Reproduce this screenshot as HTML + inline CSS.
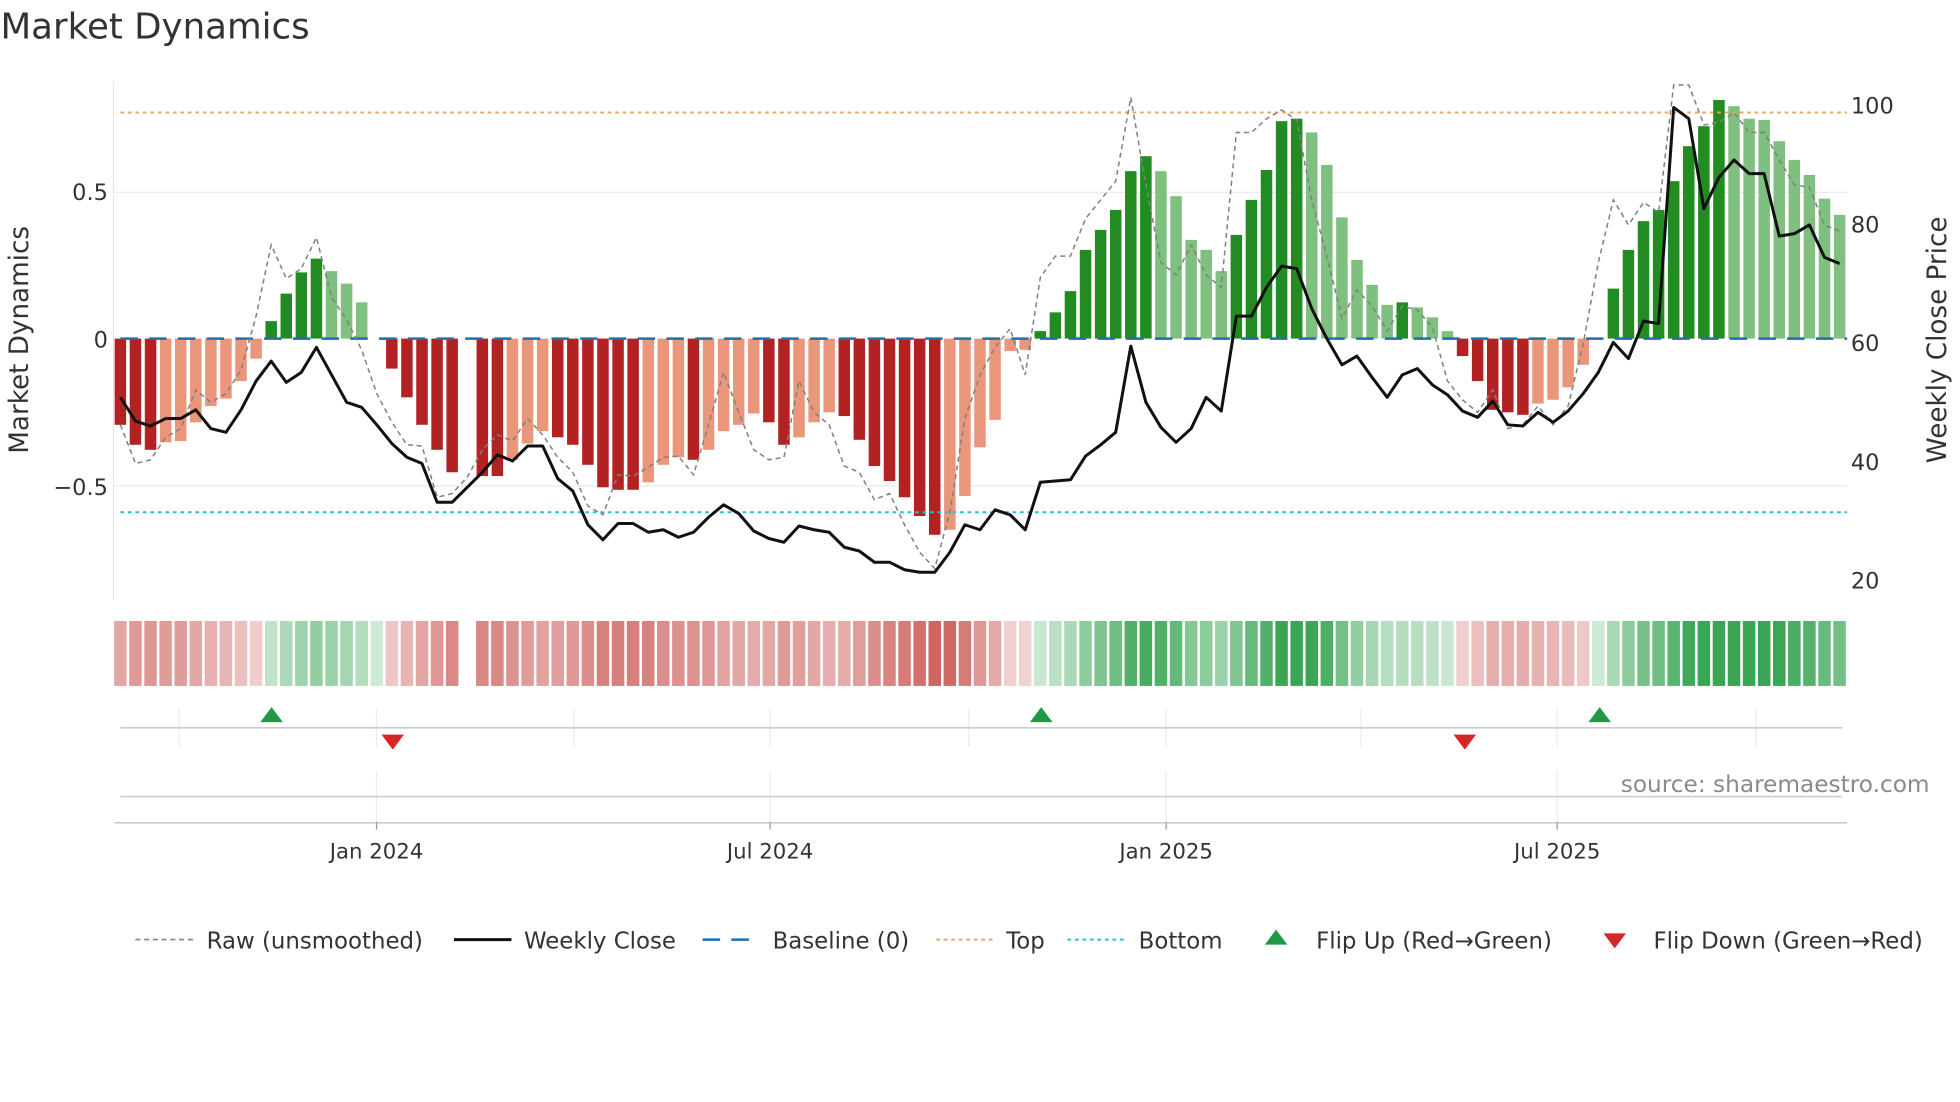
<!DOCTYPE html>
<html><head><meta charset="utf-8"><style>
html,body{margin:0;padding:0;background:#fff;width:1960px;height:1102px;overflow:hidden}
svg{display:block;font-family:"DejaVu Sans","Liberation Sans",sans-serif}
</style></head><body>
<svg id="s" width="1960" height="1102" viewBox="0 0 1568 882" xmlns="http://www.w3.org/2000/svg">
<rect width="1568" height="882" fill="#fff"/>
<text x="0" y="31" font-size="28.5" fill="#333">Market Dynamics</text>
<line x1="91" y1="154" x2="1478" y2="154" stroke="#ebebeb" stroke-width="1"/>
<line x1="91" y1="389" x2="1478" y2="389" stroke="#ebebeb" stroke-width="1"/>
<line x1="90.5" y1="65" x2="90.5" y2="480" stroke="#e6e6e6" stroke-width="1"/>
<g id="bars"></g>
<line x1="96" y1="271" x2="1478" y2="271" stroke="#1f6fa8" stroke-width="2" stroke-dasharray="14,9"/>
<line x1="96" y1="90" x2="1478" y2="90" stroke="#f0a560" stroke-width="1.6" stroke-dasharray="3,3"/>
<line x1="96" y1="410" x2="1478" y2="410" stroke="#22c3d6" stroke-width="1.6" stroke-dasharray="3,3"/>
<polyline id="raw" fill="none" stroke="#808080" stroke-width="1.2" stroke-dasharray="4,3"/>
<polyline id="close" fill="none" stroke="#111" stroke-width="2.4" stroke-linejoin="round"/>
<g font-size="18" fill="#333">
<text x="86" y="160" text-anchor="end">0.5</text>
<text x="86" y="278" text-anchor="end">0</text>
<text x="86" y="396" text-anchor="end">−0.5</text>
<text x="1481" y="91">100</text>
<text x="1481" y="186">80</text>
<text x="1481" y="281">60</text>
<text x="1481" y="376">40</text>
<text x="1481" y="471">20</text>
<text transform="translate(22,272) rotate(-90)" text-anchor="middle" font-size="21">Market Dynamics</text>
<text transform="translate(1557,272) rotate(-90)" text-anchor="middle" font-size="21">Weekly Close Price</text>
</g>
<g id="heat"></g>
<g stroke="#ececec" stroke-width="1">
<line x1="143" y1="567" x2="143" y2="598"/><line x1="301" y1="567" x2="301" y2="598"/><line x1="459" y1="567" x2="459" y2="598"/><line x1="616" y1="567" x2="616" y2="598"/><line x1="775" y1="567" x2="775" y2="598"/><line x1="933" y1="567" x2="933" y2="598"/><line x1="1089" y1="567" x2="1089" y2="598"/><line x1="1246" y1="567" x2="1246" y2="598"/><line x1="1405" y1="567" x2="1405" y2="598"/>
<line x1="301" y1="617" x2="301" y2="658"/><line x1="616" y1="617" x2="616" y2="658"/><line x1="933" y1="617" x2="933" y2="658"/><line x1="1246" y1="617" x2="1246" y2="658"/>
</g>
<line x1="96" y1="582.5" x2="1474" y2="582.5" stroke="#ccc" stroke-width="1.3"/>
<line x1="96" y1="637.5" x2="1474" y2="637.5" stroke="#ccc" stroke-width="1.3"/>
<line x1="91" y1="658.5" x2="1478" y2="658.5" stroke="#ccc" stroke-width="1.3"/>
<g fill="#1e9a45">
<polygon points="217,566 208,578 226,578"/><polygon points="833,566 824,578 842,578"/><polygon points="1280,566 1271,578 1289,578"/>
</g>
<g fill="#d62728">
<polygon points="305,588 323,588 314,600"/><polygon points="1163,588 1181,588 1172,600"/>
</g>
<g stroke="#999" stroke-width="1"><line x1="301" y1="658" x2="301" y2="664"/><line x1="616" y1="658" x2="616" y2="664"/><line x1="933" y1="658" x2="933" y2="664"/><line x1="1246" y1="658" x2="1246" y2="664"/></g>
<g font-size="17" fill="#333" text-anchor="middle">
<text x="301" y="687">Jan 2024</text><text x="616" y="687">Jul 2024</text><text x="933" y="687">Jan 2025</text><text x="1246" y="687">Jul 2025</text>
</g>
<text x="1544" y="634" font-size="18.6" fill="#8a8a8a" text-anchor="end">source: sharemaestro.com</text>
<g font-size="18.3" fill="#333">
<line x1="108" y1="752" x2="154" y2="752" stroke="#808080" stroke-width="1.3" stroke-dasharray="4,3"/>
<text x="165" y="759">Raw (unsmoothed)</text>
<line x1="363" y1="752" x2="409" y2="752" stroke="#111" stroke-width="2.4"/>
<text x="419" y="759">Weekly Close</text>
<line x1="562" y1="752" x2="608" y2="752" stroke="#1f6fa8" stroke-width="2" stroke-dasharray="14,9"/>
<text x="618" y="759">Baseline (0)</text>
<line x1="749" y1="752" x2="795" y2="752" stroke="#f0a560" stroke-width="1.6" stroke-dasharray="3,3"/>
<text x="805" y="759">Top</text>
<line x1="854" y1="752" x2="900" y2="752" stroke="#22c3d6" stroke-width="1.6" stroke-dasharray="3,3"/>
<text x="911" y="759">Bottom</text>
<polygon points="1021,744 1012,756 1030,756" fill="#1e9a45"/>
<text x="1053" y="759">Flip Up (Red→Green)</text>
<polygon points="1283,747 1301,747 1292,759" fill="#d62728"/>
<text x="1323" y="759">Flip Down (Green→Red)</text>
</g>
</svg>
<script>
var tops=[340,356,360,354,353,338,325,319,305,287,257,235,218,207,217,227,242,271,295,318,340,360,378,null,381,381,368,355,345,350,356,372,390,392,392,386,372,366,368,360,345,340,331,338,356,350,338,330,333,352,373,385,398,413,428,424,397,358,336,281,280,265,250,233,200,184,168,137,125,137,157,192,200,217,188,160,136,97,95,106,132,174,208,228,244,242,246,254,265,285,305,328,330,332,323,320,310,292,271,231,200,177,168,145,117,101,80,85,95,96,113,128,140,159,172];
var dark={};
[0,1,2,10,11,12,13,18,19,20,21,22,24,25,29,30,31,32,33,34,38,43,44,48,49,50,51,52,53,54,61,62,63,64,65,66,67,68,74,75,76,77,78,85,89,90,91,92,93,99,100,101,102,103,104,105,106].forEach(function(i){dark[i]=1});
var close=[318,337,341,335,335,328,343,346,328,305,289,306,298,278,300,322,326,340,355,366,371,402,402,390,378,364,369,357,357,383,393,420,432,419,419,426,424,430,426,414,404,411,425,431,434,421,424,426,438,441,450,450,456,458,458,442,420,424,408,412,424,386,385,384,365,356,346,277,322,342,354,343,318,329,253,253,230,213,215,247,271,292,285,302,318,300,295,308,316,329,334,321,340,341,330,338,329,315,298,274,287,257,259,86,95,167,142,128,139,139,189,187,180,206,211];
var raw=[340,371,368,350,343,312,322,315,296,253,196,223,215,190,238,256,280,315,338,356,357,398,395,382,360,348,353,335,348,366,378,405,412,380,381,374,366,365,380,340,298,330,360,368,366,305,330,340,373,378,400,395,420,442,455,410,335,300,278,263,300,222,205,205,175,160,145,78,148,210,220,196,220,230,106,106,95,88,96,160,205,255,232,245,265,245,248,262,305,320,330,312,343,340,325,340,325,275,210,160,180,162,170,68,68,100,98,90,106,106,128,148,150,180,185];
var NS="http://www.w3.org/2000/svg";
function X(i){return 96+i*12.07}
var b=document.getElementById('bars'),h=document.getElementById('heat');
for(var i=0;i<tops.length;i++){
 var t=tops[i]; if(t===null) continue;
 var v=(271-t)/234, x=X(i);
 if(Math.abs(t-271)>1){
  var r=document.createElementNS(NS,'rect');
  r.setAttribute('x',x-4.6);r.setAttribute('width',9.2);
  r.setAttribute('y',Math.min(t,271));r.setAttribute('height',Math.abs(t-271));
  var c=v>0?(dark[i]?'#228b22':'#7fbf7f'):(dark[i]?'#b22222':'#e9967a');
  r.setAttribute('fill',c);b.appendChild(r);
 }
 var a=Math.min(1,0.25+Math.abs(v)*1.1);
 var base=v>=0?[58,166,85]:[205,100,96];
 var col='rgb('+base.map(function(k){return Math.round(255-(255-k)*a)}).join(',')+')';
 var q=document.createElementNS(NS,'rect');
 q.setAttribute('x',x-5);q.setAttribute('width',10);q.setAttribute('y',497);q.setAttribute('height',52);q.setAttribute('fill',col);h.appendChild(q);
}
function pts(a){return a.map(function(y,i){return X(i).toFixed(1)+','+y}).join(' ')}
document.getElementById('raw').setAttribute('points',pts(raw));
document.getElementById('close').setAttribute('points',pts(close));
</script>
</body></html>
